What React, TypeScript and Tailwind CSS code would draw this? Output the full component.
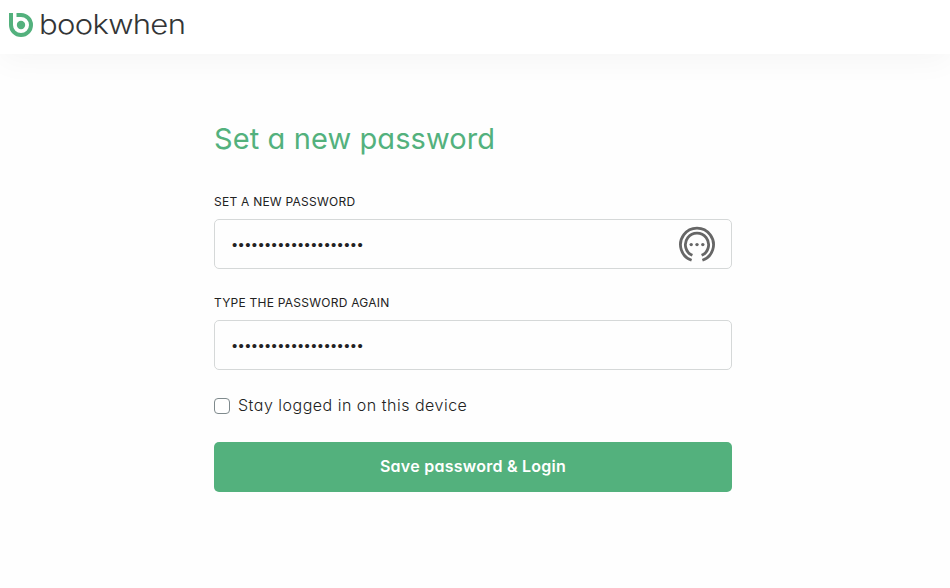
import { useState } from "react"

function Logo() {
  return (
    <a href="#" aria-label="bookwhen" className="ml-[9px] flex h-[50px] items-center text-[#333536]">
      <svg width="24" height="24" viewBox="0 0 24 24" fill="none">
        <path d="M2 0v12a10 10 0 1 0 10-10H7.5" stroke="#53b17d" strokeWidth="4" />
        <circle cx="12" cy="12" r="4.2" fill="#53b17d" />
      </svg>
      <span className="mb-[2px] ml-[6px] origin-left scale-x-[1.15] text-[27px] leading-none font-[350] tracking-[-0.6px]">
        bookwhen
      </span>
    </a>
  )
}

function PasswordManagerIcon() {
  return (
    <svg width="36" height="37" viewBox="0 0 36 37" fill="none" stroke="#666" strokeWidth="2.8">
      <path d="M12.6 34.3a16.5 16.5 0 1 1 10.8 0" />
      <path d="M13.4 29.3a11.6 11.6 0 1 1 9.2 0" />
      <g fill="#666" stroke="none">
        <circle cx="12.2" cy="18.6" r="1.7" />
        <circle cx="18" cy="18.6" r="1.7" />
        <circle cx="23.8" cy="18.6" r="1.7" />
      </g>
    </svg>
  )
}

type PasswordFieldProps = {
  id: string
  label: string
  icon?: boolean
}

function PasswordField({ id, label, icon }: PasswordFieldProps) {
  const [value, setValue] = useState("correcthorsebattery1")

  return (
    <div>
      <label htmlFor={id} className="block h-[27px] pt-px text-xs leading-[18px] tracking-[0.24px] text-[#222] uppercase">
        {label}
      </label>
      <div className="flex h-[50px] items-center rounded-[5px] border border-[#d5d8d8] pr-4 pl-[17px]">
        <input
          id={id}
          type="password"
          value={value}
          onChange={(e) => setValue(e.target.value)}
          className="min-w-0 flex-1 pt-0.5 font-['Liberation_Sans',sans-serif] text-[15px] leading-6 tracking-[1.35px] text-[#222] outline-none"
        />
        {icon && <PasswordManagerIcon />}
      </div>
    </div>
  )
}

export default function App() {
  return (
    <div className="min-h-[588px] overflow-hidden bg-[#fefefe] font-['Inter',sans-serif] [font-feature-settings:'cv11']">
      <header className="h-[54px] bg-white shadow-[0_8px_30px_rgba(0,0,0,0.035)]">
        <Logo />
      </header>
      <main className="ml-[214px] w-[518px] pt-[65px]">
        <h1 className="text-[29px] leading-10 font-normal tracking-[0.1px] text-[#53b17d]">Set a new password</h1>
        <form className="mt-[33px]" onSubmit={(e) => e.preventDefault()}>
          <div className="space-y-6">
            <PasswordField id="password" label="Set a new password" icon />
            <PasswordField id="password-confirmation" label="Type the password again" />
          </div>
          <label className="mt-6 flex h-6 items-center gap-2 text-base font-light tracking-[0.5px] text-[#222]">
            <input type="checkbox" className="size-4 appearance-none rounded border border-[#7f8a8d] bg-white" />
            <span className="pb-0.5">Stay logged in on this device</span>
          </label>
          <button
            type="submit"
            className="mt-6 h-[50px] w-full rounded-[5px] bg-[#53b17d] pb-0.5 text-base font-semibold tracking-[0.25px] text-white"
          >
            Save password &amp; Login
          </button>
        </form>
      </main>
    </div>
  )
}
